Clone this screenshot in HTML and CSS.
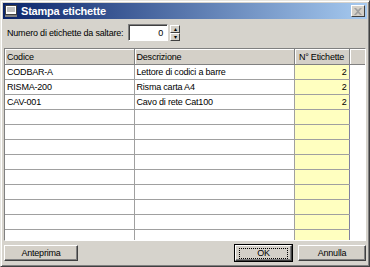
FILE: index.html
```html
<!DOCTYPE html>
<html lang="it">
<head>
    <meta charset="UTF-8">
    <title>Stampa etichette</title>
    <link rel="stylesheet" href="styles.css">
</head>
<body>
    <div class="window">
        <!-- Title bar -->
        <div class="titlebar">
            <svg class="app-icon" width="12" height="12" viewBox="0 0 12 12">
                <rect x="0.5" y="0.5" width="11" height="9" fill="#fff" stroke="#404040"/>
                <rect x="2" y="2" width="8" height="5" fill="#c0c0c0"/>
                <rect x="0" y="10" width="12" height="2" fill="#808080"/>
            </svg>
            <span class="title">Stampa etichette</span>
            <div class="close-btn">
                <svg width="8" height="7" viewBox="0 0 8 7">
                    <path d="M0 0h2l2 2 2-2h2L5 3.5 8 7H6L4 5 2 7H0l3-3.5z" fill="#a0a0a0"/>
                </svg>
            </div>
        </div>

        <div class="content">
            <!-- Skip labels -->
            <div class="skip-row">
                <label>Numero di etichette da saltare:</label>
                <div class="spin-input">0</div>
                <div class="spin-buttons">
                    <div class="spin-btn">&#9652;</div>
                    <div class="spin-btn">&#9662;</div>
                </div>
            </div>

            <!-- Grid -->
            <div class="grid">
                <table>
                    <colgroup>
                        <col class="col-code">
                        <col class="col-desc">
                        <col class="col-qty">
                        <col>
                    </colgroup>
                    <thead>
                        <tr>
                            <th>Codice</th>
                            <th>Descrizione</th>
                            <th class="center">N° Etichette</th>
                            <th class="spacer"></th>
                        </tr>
                    </thead>
                    <tbody>
                        <tr><td>CODBAR-A</td><td>Lettore di codici a barre</td><td class="qty">2</td><td class="spacer"></td></tr>
                        <tr><td>RISMA-200</td><td>Risma carta A4</td><td class="qty">2</td><td class="spacer"></td></tr>
                        <tr><td>CAV-001</td><td>Cavo di rete Cat100</td><td class="qty">2</td><td class="spacer"></td></tr>
                        <tr><td></td><td></td><td class="qty"></td><td class="spacer"></td></tr>
                        <tr><td></td><td></td><td class="qty"></td><td class="spacer"></td></tr>
                        <tr><td></td><td></td><td class="qty"></td><td class="spacer"></td></tr>
                        <tr><td></td><td></td><td class="qty"></td><td class="spacer"></td></tr>
                        <tr><td></td><td></td><td class="qty"></td><td class="spacer"></td></tr>
                        <tr><td></td><td></td><td class="qty"></td><td class="spacer"></td></tr>
                        <tr><td></td><td></td><td class="qty"></td><td class="spacer"></td></tr>
                        <tr><td></td><td></td><td class="qty"></td><td class="spacer"></td></tr>
                        <tr><td></td><td></td><td class="qty"></td><td class="spacer"></td></tr>
                    </tbody>
                </table>
            </div>

            <!-- Buttons -->
            <div class="buttons">
                <button class="btn">Anteprima</button>
                <div class="right">
                    <button class="btn btn-default"><span class="focus">OK</span></button>
                    <button class="btn btn-cancel">Annulla</button>
                </div>
            </div>
        </div>
    </div>
</body>
</html>
```

FILE: styles.css
```css
/* Base */
body {
    margin: 0;
    padding: 0;
    font-family: "Liberation Sans", Arial, sans-serif;
    font-size: 9px;
    letter-spacing: -0.2px;
    color: #000;
    background: #d4d0c8;
    overflow: hidden;
}

/* Window frame */
.window {
    width: 370px;
    height: 267px;
    box-sizing: border-box;
    background: #d6d3cc;
    border: 1px solid;
    border-color: #e8e6e0 #404040 #404040 #e8e6e0;
    box-shadow: inset 1px 1px 0 #fff, inset -1px -1px 0 #808080;
    padding: 2px;
    display: flex;
    flex-direction: column;
}

.titlebar {
    height: 16px;
    background: linear-gradient(to right, #0a246a, #a6caf0);
    display: flex;
    align-items: center;
    padding: 0 2px;
}

.app-icon {
    margin-right: 4px;
}

.title {
    color: #fff;
    font-weight: bold;
    font-size: 11px;
    letter-spacing: -0.2px;
    flex: 1;
}

.close-btn {
    width: 14px;
    height: 12px;
    box-sizing: border-box;
    background: #d4d0c8;
    border: 1px solid;
    border-color: #fff #404040 #404040 #fff;
    display: flex;
    align-items: center;
    justify-content: center;
}

.content {
    flex: 1;
    display: flex;
    flex-direction: column;
    padding: 4px 1px 0 1px;
}

/* Spin row */
.skip-row {
    display: flex;
    align-items: center;
    height: 19px;
    padding-left: 3px;
}

.skip-row label {
    width: 121px;
}

.spin-input {
    width: 40px;
    height: 17px;
    box-sizing: border-box;
    background: #fff;
    border: 1px solid;
    border-color: #808080 #fff #fff #808080;
    box-shadow: inset 1px 1px 0 #404040;
    text-align: right;
    padding: 3px 4px 0 0;
}

.spin-buttons {
    display: flex;
    flex-direction: column;
    margin-left: 2px;
}

.spin-btn {
    width: 10px;
    height: 8px;
    box-sizing: border-box;
    background: #d4d0c8;
    border: 1px solid;
    border-color: #fff #404040 #404040 #fff;
    font-size: 6px;
    line-height: 6px;
    text-align: center;
    overflow: hidden;
}

/* Grid */
.grid {
    margin-top: 6px;
    height: 193px;
    box-sizing: border-box;
    border: 1px solid;
    border-color: #808080 #fff #fff #808080;
    background: #fff;
    overflow: hidden;
}

table {
    border-collapse: collapse;
    table-layout: fixed;
    width: 100%;
}

.col-code { width: 129px; }
.col-desc { width: 160px; }
.col-qty { width: 55px; }

th {
    height: 15px;
    background: #d4d0c8;
    font-weight: normal;
    text-align: left;
    padding: 0 2px;
    white-space: nowrap;
    border-right: 1px solid #808080;
    border-bottom: 1px solid #808080;
    box-shadow: inset 1px 1px 0 #fff;
}

th.center {
    text-align: center;
    padding: 0;
}

th.spacer {
    border-right: none;
}

td {
    height: 14px;
    padding: 0 2px;
    border-right: 1px solid #a0a0a0;
    border-bottom: 1px solid #a0a0a0;
    white-space: nowrap;
    overflow: hidden;
}

td.qty {
    background: #ffffc0;
    text-align: right;
    border-right-color: #8080a0;
}

td.spacer {
    border: none;
}

/* Buttons */
.buttons {
    display: flex;
    justify-content: space-between;
    margin-top: 4px;
}

.right {
    display: flex;
    gap: 6px;
}

.btn {
    height: 16px;
    box-sizing: border-box;
    font-family: "Liberation Sans", Arial, sans-serif;
    font-size: 9px;
    letter-spacing: -0.2px;
    background: #d4d0c8;
    border: 1px solid;
    border-color: #fff #404040 #404040 #fff;
    box-shadow: inset -1px -1px 0 #808080;
    padding: 0;
    width: 74px;
}

.btn-default {
    width: 57px;
    outline: 1px solid #000;
}

.btn-cancel {
    width: 68px;
}

.focus {
    display: inline-block;
    width: 47px;
    line-height: 9px;
    border: 1px dotted #000;
}
```
